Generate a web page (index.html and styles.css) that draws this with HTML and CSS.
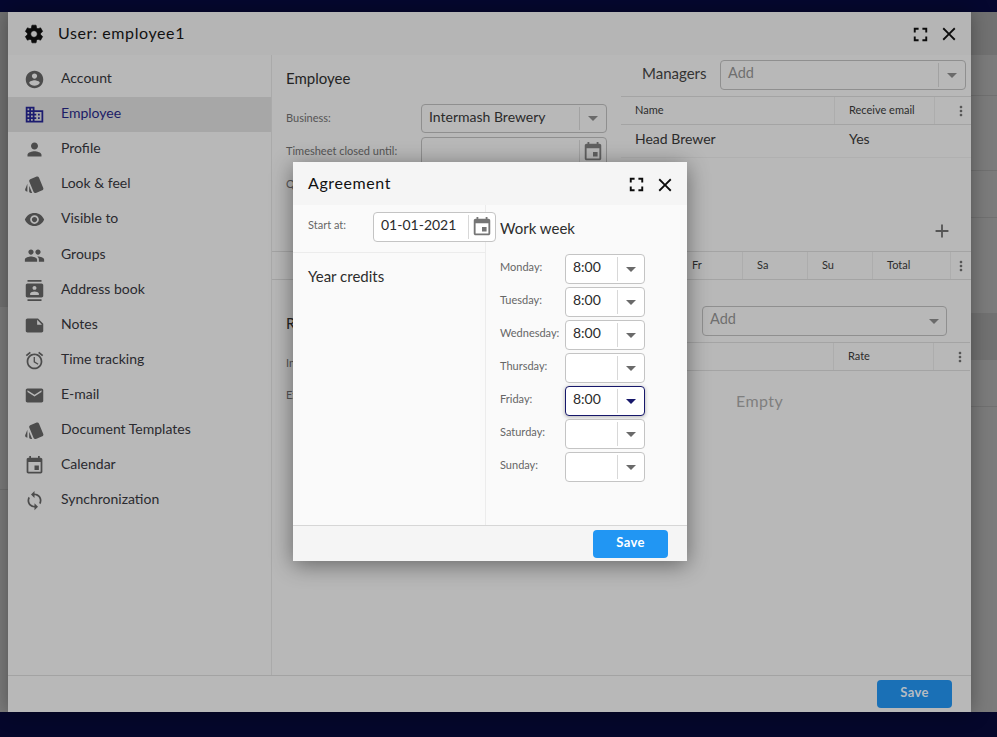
FILE: index.html
```html
<!DOCTYPE html>
<html lang="en">
<head>
<meta charset="utf-8">
<title>User: employee1</title>
<link rel="stylesheet" href="styles.css">
</head>
<body>
<svg class="defs" width="0" height="0" aria-hidden="true">
  <symbol id="i-cog" viewBox="0 0 24 24"><path d="M19.14 12.94c.04-.3.06-.61.06-.94 0-.32-.02-.64-.07-.94l2.03-1.58c.18-.14.23-.41.12-.61l-1.92-3.32c-.12-.22-.37-.29-.59-.22l-2.39.96c-.5-.38-1.03-.7-1.62-.94L14.4 2.81c-.04-.24-.24-.41-.48-.41h-3.84c-.24 0-.43.17-.47.41L9.25 5.35c-.59.24-1.13.57-1.62.94l-2.39-.96c-.22-.08-.47 0-.59.22L2.74 8.87c-.12.21-.08.47.12.61l2.03 1.58c-.05.3-.09.63-.09.94s.02.64.07.94l-2.03 1.58c-.18.14-.23.41-.12.61l1.92 3.32c.12.22.37.29.59.22l2.39-.96c.5.38 1.03.7 1.62.94l.36 2.54c.05.24.24.41.48.41h3.84c.24 0 .44-.17.47-.41l.36-2.54c.59-.24 1.13-.56 1.62-.94l2.39.96c.22.08.47 0 .59-.22l1.92-3.32c.12-.22.07-.47-.12-.61l-2.01-1.58zM12 15.6c-1.98 0-3.6-1.62-3.6-3.6s1.62-3.6 3.6-3.6 3.6 1.62 3.6 3.6-1.62 3.6-3.6 3.6z"/></symbol>
  <symbol id="i-account" viewBox="0 0 24 24"><path d="M12 2C6.48 2 2 6.48 2 12s4.48 10 10 10 10-4.48 10-10S17.52 2 12 2zm0 3c1.66 0 3 1.34 3 3s-1.34 3-3 3-3-1.34-3-3 1.34-3 3-3zm0 14.2c-2.5 0-4.71-1.28-6-3.22.03-1.99 4-3.08 6-3.08 1.99 0 5.97 1.09 6 3.08-1.29 1.94-3.5 3.22-6 3.22z"/></symbol>
  <symbol id="i-domain" viewBox="0 0 24 24"><path d="M12 7V3H2v18h20V7H12zM6 19H4v-2h2v2zm0-4H4v-2h2v2zm0-4H4V9h2v2zm0-4H4V5h2v2zm4 12H8v-2h2v2zm0-4H8v-2h2v2zm0-4H8V9h2v2zm0-4H8V5h2v2zm10 12h-8v-2h2v-2h-2v-2h2v-2h-2V9h8v10zm-2-8h-2v2h2v-2zm0 4h-2v2h2v-2z"/></symbol>
  <symbol id="i-person" viewBox="0 0 24 24"><path d="M12 12c2.21 0 4-1.79 4-4s-1.79-4-4-4-4 1.79-4 4 1.79 4 4 4zm0 2c-2.67 0-8 1.34-8 4v2h16v-2c0-2.66-5.33-4-8-4z"/></symbol>
  <symbol id="i-style" viewBox="0 0 24 24"><path d="M2.53 19.65l1.34.56v-9.03l-2.43 5.86c-.41 1.02.08 2.19 1.09 2.61zm19.5-3.7L17.07 3.98c-.31-.75-1.04-1.21-1.81-1.23-.26 0-.53.04-.79.15L7.1 5.95c-.75.31-1.21 1.03-1.23 1.8-.01.27.04.54.15.8l4.96 11.97c.31.76 1.05 1.22 1.83 1.23.26 0 .52-.05.77-.15l7.36-3.05c1.02-.42 1.51-1.59 1.09-2.6zM5.88 19.75c0 1.1.9 2 2 2h1.45l-3.45-8.34v6.34z"/></symbol>
  <symbol id="i-eye" viewBox="0 0 24 24"><path d="M12 4.5C7 4.5 2.73 7.61 1 12c1.73 4.39 6 7.5 11 7.5s9.27-3.11 11-7.5c-1.73-4.39-6-7.5-11-7.5zM12 17c-2.76 0-5-2.24-5-5s2.24-5 5-5 5 2.24 5 5-2.24 5-5 5zm0-8c-1.66 0-3 1.34-3 3s1.34 3 3 3 3-1.34 3-3-1.34-3-3-3z"/></symbol>
  <symbol id="i-people" viewBox="0 0 24 24"><path d="M16 11c1.66 0 2.99-1.34 2.99-3S17.66 5 16 5c-1.66 0-3 1.34-3 3s1.34 3 3 3zm-8 0c1.66 0 2.99-1.34 2.99-3S9.66 5 8 5C6.34 5 5 6.34 5 8s1.34 3 3 3zm0 2c-2.33 0-7 1.17-7 3.5V19h14v-2.5c0-2.33-4.67-3.5-7-3.5zm8 0c-.29 0-.62.02-.97.05 1.16.84 1.97 1.97 1.97 3.45V19h6v-2.5c0-2.33-4.67-3.5-7-3.5z"/></symbol>
  <symbol id="i-contacts" viewBox="0 0 24 24"><path d="M20 0H4v2h16V0zM4 24h16v-2H4v2zM20 4H4c-1.1 0-2 .9-2 2v12c0 1.1.9 2 2 2h16c1.1 0 2-.9 2-2V6c0-1.1-.9-2-2-2zm-8 2.75c1.24 0 2.25 1.01 2.25 2.25s-1.01 2.25-2.25 2.25S9.75 10.24 9.75 9 10.76 6.75 12 6.75zM17 17H7v-1.5c0-1.67 3.33-2.5 5-2.5s5 .83 5 2.5V17z"/></symbol>
  <symbol id="i-note" viewBox="0 0 24 24"><path d="M22 10l-6-6H4c-1.1 0-2 .9-2 2v12.01c0 1.1.9 1.99 2 1.99l16-.01c1.1 0 2-.89 2-1.99v-8zm-7-4.5l5.5 5.5H15V5.5z"/></symbol>
  <symbol id="i-alarm" viewBox="0 0 24 24"><path d="M22 5.72l-4.6-3.86-1.29 1.53 4.6 3.86L22 5.72zM7.88 3.39L6.6 1.86 2 5.71l1.29 1.53 4.59-3.85zM12.5 8H11v6l4.75 2.85.75-1.23-4-2.37V8zM12 4c-4.97 0-9 4.03-9 9s4.02 9 9 9c4.97 0 9-4.03 9-9s-4.03-9-9-9zm0 16c-3.87 0-7-3.13-7-7s3.13-7 7-7 7 3.13 7 7-3.13 7-7 7z"/></symbol>
  <symbol id="i-email" viewBox="0 0 24 24"><path d="M20 4H4c-1.1 0-1.99.9-1.99 2L2 18c0 1.1.9 2 2 2h16c1.1 0 2-.9 2-2V6c0-1.1-.9-2-2-2zm0 4l-8 5-8-5V6l8 5 8-5v2z"/></symbol>
  <symbol id="i-event" viewBox="0 0 24 24"><path d="M17 12h-5v5h5v-5zM16 1v2H8V1H6v2H5c-1.11 0-1.99.9-1.99 2L3 19c0 1.1.89 2 2 2h14c1.1 0 2-.9 2-2V5c0-1.1-.9-2-2-2h-1V1h-2zm3 18H5V8h14v11z"/></symbol>
  <symbol id="i-sync" viewBox="0 0 24 24"><path d="M12 4V1L8 5l4 4V6c3.31 0 6 2.69 6 6 0 1.01-.25 1.97-.7 2.8l1.46 1.46C19.54 15.03 20 13.57 20 12c0-4.42-3.58-8-8-8zm0 14c-3.31 0-6-2.69-6-6 0-1.01.25-1.97.7-2.8L5.24 7.74C4.46 8.97 4 10.43 4 12c0 4.42 3.58 8 8 8v3l4-4-4-4v3z"/></symbol>
  <symbol id="i-close" viewBox="0 0 24 24"><path d="M19 6.41L17.59 5 12 10.59 6.41 5 5 6.41 10.59 12 5 17.59 6.41 19 12 13.41 17.59 19 19 17.59 13.41 12z"/></symbol>
  <symbol id="i-full" viewBox="0 0 24 24"><path d="M7 14H5v5h5v-2H7v-3zm-2-4h2V7h3V5H5v5zm12 7h-3v2h5v-5h-2v3zM14 5v2h3v3h2V5h-5z"/></symbol>
  <symbol id="i-more" viewBox="0 0 24 24"><path d="M12 8c1.1 0 2-.9 2-2s-.9-2-2-2-2 .9-2 2 .9 2 2 2zm0 2c-1.1 0-2 .9-2 2s.9 2 2 2 2-.9 2-2-.9-2-2-2zm0 6c-1.1 0-2 .9-2 2s.9 2 2 2 2-.9 2-2-.9-2-2-2z"/></symbol>
  <symbol id="i-add" viewBox="0 0 24 24"><path d="M19 13h-6v6h-2v-6H5v-2h6V5h2v6h6v2z"/></symbol>
</svg>

<div class="desktop">
  <div class="navy navy-top"></div>
  <div class="strips">
    <div class="strip strip-left">
      <div class="seg seg-dark seg-l1"></div>
      <div class="seg seg-l2"></div>
      <div class="seg seg-l3"></div>
    </div>
    <div class="strip strip-right">
      <div class="seg seg-dark seg-r1"></div>
      <div class="seg seg-r2"></div>
      <div class="seg seg-r3"></div>
      <div class="seg seg-r4"></div>
      <div class="seg seg-r5"></div>
      <div class="seg seg-dark seg-r6"></div>
      <div class="seg seg-r7"></div>
      <div class="seg seg-r8"></div>
    </div>
  </div>
  <div class="navy navy-bottom"></div>
</div>

<section class="window">
  <header class="win-head">
    <svg class="ic-cog"><use href="#i-cog"/></svg>
    <h1 class="win-title">User: employee1</h1>
    <svg class="ic-full"><use href="#i-full"/></svg>
    <svg class="ic-close"><use href="#i-close"/></svg>
  </header>
  <div class="win-body">
    <nav class="side">
      <a class="side-item"><svg class="side-ic"><use href="#i-account"/></svg><span>Account</span></a>
      <a class="side-item active"><svg class="side-ic"><use href="#i-domain"/></svg><span>Employee</span></a>
      <a class="side-item"><svg class="side-ic"><use href="#i-person"/></svg><span>Profile</span></a>
      <a class="side-item"><svg class="side-ic"><use href="#i-style"/></svg><span>Look &amp; feel</span></a>
      <a class="side-item"><svg class="side-ic"><use href="#i-eye"/></svg><span>Visible to</span></a>
      <a class="side-item"><svg class="side-ic"><use href="#i-people"/></svg><span>Groups</span></a>
      <a class="side-item"><svg class="side-ic"><use href="#i-contacts"/></svg><span>Address book</span></a>
      <a class="side-item"><svg class="side-ic"><use href="#i-note"/></svg><span>Notes</span></a>
      <a class="side-item"><svg class="side-ic"><use href="#i-alarm"/></svg><span>Time tracking</span></a>
      <a class="side-item"><svg class="side-ic"><use href="#i-email"/></svg><span>E-mail</span></a>
      <a class="side-item"><svg class="side-ic"><use href="#i-style"/></svg><span>Document Templates</span></a>
      <a class="side-item"><svg class="side-ic"><use href="#i-event"/></svg><span>Calendar</span></a>
      <a class="side-item"><svg class="side-ic"><use href="#i-sync"/></svg><span>Synchronization</span></a>
    </nav>
    <div class="content">
      <div class="top-block">
        <div class="col-left">
          <h2 class="sec-title">Employee</h2>
          <div class="form-row">
            <label class="lbl lbl-wide">Business:</label>
            <div class="field field-dim field-main"><span class="field-val">Intermash Brewery</span><span class="field-btn"><i class="caret"></i></span></div>
          </div>
          <div class="form-row">
            <label class="lbl lbl-wide">Timesheet closed until:</label>
            <div class="field field-dim field-main"><span class="field-val"></span><span class="field-btn"><svg class="ic-cal"><use href="#i-event"/></svg></span></div>
          </div>
          <div class="form-row">
            <label class="lbl lbl-wide">Q</label>
          </div>
        </div>
        <div class="col-right">
          <div class="mgr-row">
            <span class="mgr-title">Managers</span>
            <div class="field field-dim field-mgr"><span class="field-val placeholder">Add</span><span class="field-btn"><i class="caret"></i></span></div>
          </div>
          <div class="thead">
            <span class="th th-fill">Name</span>
            <span class="th th-recv">Receive email</span>
            <span class="th th-dots"><svg class="ic-more"><use href="#i-more"/></svg></span>
          </div>
          <div class="trow">
            <span class="td td-fill">Head Brewer</span>
            <span class="td td-recv">Yes</span>
          </div>
          <div class="add-row"><svg class="ic-add"><use href="#i-add"/></svg></div>
        </div>
      </div>
      <div class="thead thead-week">
        <span class="th th-fill"></span>
        <span class="th th-day"></span>
        <span class="th th-day"></span>
        <span class="th th-day"></span>
        <span class="th th-day"></span>
        <span class="th th-day">Fr</span>
        <span class="th th-day">Sa</span>
        <span class="th th-day">Su</span>
        <span class="th th-total">Total</span>
        <span class="th th-dots"><svg class="ic-more"><use href="#i-more"/></svg></span>
      </div>
      <div class="low-block">
        <div class="col-left col-low">
          <h2 class="sec-title sec-rates">Rates</h2>
          <div class="low-row"><label class="lbl">Income:</label></div>
          <div class="low-row"><label class="lbl">Extra:</label></div>
        </div>
        <div class="col-right">
          <div class="rate-add">
            <div class="field field-dim field-rate"><span class="field-val placeholder">Add</span><i class="caret"></i></div>
          </div>
          <div class="thead thead-rate">
            <span class="th th-fill"></span>
            <span class="th th-rate">Rate</span>
            <span class="th th-dots"><svg class="ic-more"><use href="#i-more"/></svg></span>
          </div>
          <div class="empty">Empty</div>
        </div>
      </div>
    </div>
  </div>
  <footer class="win-foot"><button class="btn btn-dim">Save</button></footer>
</section>

<section class="modal">
  <header class="modal-head">
    <h2 class="modal-title">Agreement</h2>
    <svg class="ic-full"><use href="#i-full"/></svg>
    <svg class="ic-close"><use href="#i-close"/></svg>
  </header>
  <div class="modal-body">
    <div class="m-left">
      <div class="start-row">
        <label class="m-lbl m-lbl-start">Start at:</label>
        <div class="field field-start"><span class="field-val">01-01-2021</span><span class="field-btn"><svg class="ic-cal"><use href="#i-event"/></svg></span></div>
      </div>
      <h3 class="m-heading m-credits">Year credits</h3>
    </div>
    <div class="m-right">
      <h3 class="m-heading m-week">Work week</h3>
      <div class="day"><label class="m-lbl">Monday:</label><div class="field field-time"><span class="field-val">8:00</span><span class="field-btn"><i class="caret"></i></span></div></div>
      <div class="day"><label class="m-lbl">Tuesday:</label><div class="field field-time"><span class="field-val">8:00</span><span class="field-btn"><i class="caret"></i></span></div></div>
      <div class="day"><label class="m-lbl">Wednesday:</label><div class="field field-time"><span class="field-val">8:00</span><span class="field-btn"><i class="caret"></i></span></div></div>
      <div class="day"><label class="m-lbl">Thursday:</label><div class="field field-time"><span class="field-val"></span><span class="field-btn"><i class="caret"></i></span></div></div>
      <div class="day"><label class="m-lbl">Friday:</label><div class="field field-time focused"><span class="field-val">8:00</span><span class="field-btn"><i class="caret"></i></span></div></div>
      <div class="day"><label class="m-lbl">Saturday:</label><div class="field field-time"><span class="field-val"></span><span class="field-btn"><i class="caret"></i></span></div></div>
      <div class="day"><label class="m-lbl">Sunday:</label><div class="field field-time"><span class="field-val"></span><span class="field-btn"><i class="caret"></i></span></div></div>
    </div>
  </div>
  <footer class="modal-foot"><button class="btn">Save</button></footer>
</section>
</body>
</html>
```

FILE: styles.css
```css
* { box-sizing: border-box; }
html, body { margin: 0; padding: 0; height: 737px; overflow: hidden; }
body { font-family: Lato, "Open Sans", sans-serif; color: #2b2b2b; position: relative; background: #777; }
.defs { position: absolute; }
h1, h2, h3 { margin: 0; font-weight: 400; }
svg { fill: currentColor; display: block; flex: none; }

/* desktop behind the window */
.desktop { height: 737px; display: flex; flex-direction: column; }
.navy { background: #05072f; }
.navy-top { height: 12px; }
.navy-bottom { height: 25px; background: #05072b; }
.strips { flex: 1; display: flex; justify-content: space-between; }
.strip { display: flex; flex-direction: column; }
.strip-left { width: 8px; }
.strip-right { width: 26px; }
.seg { background: #7b7b7b; border-bottom: 1px solid #707070; }
.seg-dark { background: #717171; }
.seg-l1 { height: 295px; }
.seg-l2 { height: 183px; }
.seg-l3 { flex: 1; border-bottom: 0; }
.seg-r1 { height: 43px; border-bottom: 0; }
.seg-r2 { height: 41px; }
.seg-r3 { height: 75px; }
.seg-r4 { height: 47px; }
.seg-r5 { height: 95px; border-bottom: 0; }
.seg-r6 { height: 47px; border-bottom: 0; }
.seg-r7 { height: 47px; }
.seg-r8 { flex: 1; border-bottom: 0; }

/* main window */
.window {
  position: absolute; left: 8px; top: 12px; width: 963px; height: 700px;
  background: #b8b8b8; display: flex; flex-direction: column;
  box-shadow: 0 0 18px rgba(0,0,0,.35);
}
.win-head { height: 43px; flex: none; display: flex; align-items: center; background: #b5b5b5; padding: 1px 11.5px 0 15px; color: #0c0c0c; }
.ic-cog { width: 22px; height: 22px; margin-right: 13px; stroke: currentColor; stroke-width: .7; }
.win-title { font-size: 16px; letter-spacing: .6px; flex: 1; color: #111; margin-top: -3px; }
.ic-full { width: 23px; height: 23px; margin-right: 5.5px; color: #0c0c0c; }
.ic-close { width: 22px; height: 22px; color: #0c0c0c; }
.win-body { flex: 1; min-height: 0; display: flex; }
.win-foot { height: 37px; flex: none; border-top: 1px solid #a3a3a3; display: flex; justify-content: flex-end; align-items: flex-start; padding: 4px 19px 0 0; }

/* sidebar */
.side { width: 264px; flex: none; border-right: 1px solid #aaa; padding-top: 7px; }
.side-item { height: 35.1px; display: flex; align-items: center; padding-left: 15.5px; font-size: 14px; color: #2a2a2f; }
.side-item span { margin-top: -4px; }
.side-ic { width: 21px; height: 21px; margin-right: 16.5px; color: #4c4c4c; }
.side-item.active { background: #a7a7a7; color: #1c1c66; }
.side-item.active .side-ic { color: #1c1c70; }

/* content */
.content { flex: 1; min-width: 0; display: flex; flex-direction: column; }
.top-block { height: 196px; flex: none; display: flex; }
.col-left { width: 349px; flex: none; padding: 14px 14px 0; }
.col-right { flex: 1; min-width: 0; display: flex; flex-direction: column; }
.sec-title { font-size: 15px; line-height: 18px; color: #242424; margin-bottom: 17px; }
.form-row { display: flex; align-items: center; height: 29px; margin-bottom: 4px; }
.lbl { font-size: 11px; color: #555; }
.lbl-wide { width: 135px; flex: none; margin-top: -3px; }

.field { height: 30px; border: 1px solid #c4c4c4; border-radius: 4px; background: #fff; display: flex; align-items: stretch; }
.field-dim { background: transparent; border-color: #8f8f8f; }
.field-val { flex: 1; min-width: 0; font-size: 14px; line-height: 24px; padding-left: 7px; color: #2b2b2b; }
.field-btn { flex: none; display: flex; align-items: center; justify-content: center; width: 27px; margin: 2px 0; border-left: 1px solid #d8d8d8; }
.field-dim .field-btn { border-left-color: #a2a2a2; }
.caret { display: block; width: 0; height: 0; border: 5px solid transparent; border-top: 5px solid #6a6a6a; border-bottom: 0; }
.ic-cal { width: 22px; height: 22px; color: #606060; }
.modal .ic-cal { color: #757575; }
.field-main { width: 186px; height: 29px; }

.mgr-row { height: 41px; display: flex; align-items: flex-start; padding: 5px 5px 0 21px; }
.mgr-title { font-size: 15px; line-height: 26px; width: 78px; color: #333; }
.field-mgr { flex: 1; height: 30px; }
.placeholder { color: #6f6f6f; font-size: 14.5px; }

.thead { display: flex; align-items: stretch; height: 29px; border-top: 1px solid #a4a4a4; border-bottom: 1px solid #a4a4a4; flex: none; }
.th { font-size: 11px; line-height: 25px; padding-left: 14px; color: #2c2c2c; border-right: 1px solid #adadad; }
.th-fill { flex: 1; }
.th-recv { width: 100px; flex: none; }
.th-dots { width: 36px; padding: 0 2px 0 0; border-right: 0; display: flex; align-items: center; justify-content: flex-end; flex: none; }
.ic-more { width: 16px; height: 16px; color: #555; }
.trow { display: flex; height: 33px; align-items: flex-start; border-bottom: 1px solid #b0b0b0; flex: none; }
.td { font-size: 14px; line-height: 28px; padding-left: 14px; color: #2b2b2b; }
.td-fill { flex: 1; }
.td-recv { width: 136px; flex: none; }
.add-row { flex: 1; display: flex; justify-content: flex-end; align-items: flex-start; padding: 62px 18.5px 0 0; color: #555; }
.ic-add { width: 22px; height: 22px; }

.th-day { width: 65px; flex: none; }
.th-total { width: 78px; flex: none; }
.thead-week .th-dots { width: 20px; padding-right: 2px; }
.low-block { flex: 1; min-height: 0; display: flex; }
.col-low { padding-top: 34px; }
.sec-rates { margin-bottom: 14px; }
.low-row { height: 32px; display: flex; align-items: center; }
.rate-add { padding: 26px 0 0 81px; height: 62px; flex: none; }
.field-rate { width: 245px; height: 30px; align-items: center; padding-right: 7px; }
.field-rate .field-val { align-self: flex-start; line-height: 24px; }
.thead-rate { margin-right: 1px; }
.th-rate { width: 100px; flex: none; }
.empty { margin: 20px 0 0 115px; font-size: 16px; letter-spacing: .4px; color: #7f7f7f; }

.btn { width: 75px; height: 28px; border: 0; border-radius: 4px; background: #2196f3; color: #fff; font: 700 13px Lato, sans-serif; letter-spacing: .3px; padding: 0 0 4px; }
.btn-dim { background: #1a70b6; color: #b6bcc2; }

/* agreement dialog */
.modal {
  position: absolute; left: 293px; top: 162px; width: 394px; height: 399px;
  background: #fafafa; display: flex; flex-direction: column; border-radius: 2px;
  box-shadow: 0 4px 22px rgba(0,0,0,.45);
}
.modal-head { height: 43px; flex: none; display: flex; align-items: center; background: #f5f5f5; padding: 2px 11.5px 0 15px; }
.modal-title { flex: 1; font-size: 16px; letter-spacing: .6px; color: #111; margin-top: -4px; }
.modal-body { flex: 1; min-height: 0; display: flex; }
.m-left { width: 193px; flex: none; border-right: 1px solid #ececec; }
.start-row { height: 48px; border-bottom: 1px solid #ececec; display: flex; align-items: flex-start; padding: 7px 0 0 15px; }
.m-lbl { font-size: 11px; color: #666; }
.m-lbl-start { width: 65px; flex: none; line-height: 26px; }
.field-start { width: 123px; flex: none; height: 30px; position: relative; z-index: 1; }
.field-start .field-val { line-height: 24px; }
.m-heading { font-size: 15px; color: #2d2d2d; }
.m-credits { padding: 14px 0 0 15px; }
.m-right { flex: 1; padding: 14px 0 0 14px; }
.m-week { line-height: 18px; margin-bottom: 17px; }
.day { display: flex; align-items: center; height: 30px; margin-bottom: 3px; }
.day .m-lbl { width: 65px; flex: none; margin-top: -5px; }
.field-time { width: 80px; }
.focused { border-color: #17186b; box-shadow: 0 1px 4px rgba(0,0,0,.3); }
.focused .caret { border-top-color: #17186b; }
.modal-foot { height: 36px; flex: none; border-top: 1px solid #d6d6d6; background: #f5f5f5; display: flex; justify-content: flex-end; padding: 4px 19px 0 0; }
```
